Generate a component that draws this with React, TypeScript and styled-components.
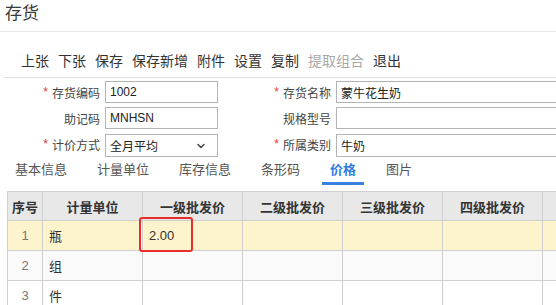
import React from 'react';
import styled, { createGlobalStyle } from 'styled-components';
import { ChevronDown } from 'lucide-react';

const GlobalStyle = createGlobalStyle`
html, body {
    margin: 0;
    padding: 0;
    background: #ffffff;
    overflow: hidden;
}
* { box-sizing: border-box; }
`;

const FONT = `"Liberation Sans", "Noto Sans CJK SC", sans-serif`;

const Page = styled.div`
width: 556px;
height: 305px;
overflow: hidden;
font-family: ${FONT};
color: #333;
`;

const Title = styled.div`
height: 32px;
line-height: 27px;
padding-left: 5px;
font-size: 17px;
color: #3a3a3a;
border-bottom: 1px solid #e6e6e6;
`;

const Toolbar = styled.div`
display: flex;
gap: 9px;
height: 46px;
padding: 20px 0 0 17px;
margin-left: 4px;
border-bottom: 1px solid #e3e3e3;
font-size: 14px;
line-height: 18px;
`;

const ToolButton = styled.span<{ disabled?: boolean }>`
color: ${props => props.disabled ? '#a8a8a8' : '#333'};
cursor: pointer;
white-space: nowrap;
`;

const Form = styled.div`
display: grid;
grid-template-columns: 105px 113px 118px 240px;
grid-auto-rows: 22px;
row-gap: 4px;
padding-top: 3px;
font-size: 12px;
`;

const Label = styled.div`
display: flex;
align-items: center;
justify-content: flex-end;
padding-right: 5px;
color: #444;
white-space: nowrap;
`;

const Star = styled.span`
color: #e5332e;
margin-right: 4px;
`;

const Input = styled.div`
height: 22px;
border: 1px solid #b4b4b4;
padding: 0 4px;
display: flex;
align-items: center;
font-size: 12px;
color: #222;
background: #fff;
`;

const Select = styled(Input)`
height: 23px;
margin-top: 1px;
justify-content: space-between;
padding-right: 10px;
`;

const Tabs = styled.div`
display: flex;
gap: 14px;
padding-left: 7px;
margin-top: 3px;
height: 28px;
`;

const Tab = styled.div<{ active?: boolean }>`
padding: 0 8px;
height: 27px;
line-height: 24px;
font-size: 13px;
color: ${props => props.active ? '#2f7ce0' : '#555'};
font-weight: ${props => props.active ? 'bold' : 'normal'};
border-bottom: 3px solid ${props => props.active ? '#3a80e0' : 'transparent'};
white-space: nowrap;
`;

const Grid = styled.table`
margin: 5px 0 0 7px;
border-collapse: collapse;
table-layout: fixed;
width: 630px;
font-size: 13px;
`;

const Th = styled.th`
height: 29px;
background: #e8e8e8;
border: 1px solid #cfcfcf;
font-weight: bold;
color: #333;
text-align: center;
padding: 0;
white-space: nowrap;
`;

const Tr = styled.tr<{ tone: 'selected' | 'alt' | 'plain' }>`
height: 30px;
background: ${props => props.tone === 'selected' ? '#fdf4cd' : props.tone === 'alt' ? '#fafafa' : '#ffffff'};
`;

const Td = styled.td<{ center?: boolean; muted?: boolean }>`
border: 1px solid #cfcfcf;
padding: 0 6px;
text-align: ${props => props.center ? 'center' : 'left'};
color: ${props => props.muted ? '#777' : '#333'};
position: relative;
`;

const Focus = styled.div`
position: absolute;
left: -4px;
top: -4px;
width: 54px;
height: 35px;
border: 2px solid #e8302b;
border-radius: 3px;
pointer-events: none;
`;

const tools = ['上张', '下张', '保存', '保存新增', '附件', '设置', '复制', '提取组合', '退出'];
const tabs = ['基本信息', '计量单位', '库存信息', '条形码', '价格', '图片'];
const columns: [string, number][] = [
    ['序号', 35], ['计量单位', 100], ['一级批发价', 100], ['二级批发价', 100],
    ['三级批发价', 100], ['四级批发价', 100], ['', 95],
];
const units = ['瓶', '组', '件'];

export default function App(): JSX.Element {
    return (
        <Page>
            <GlobalStyle />
            <Title>存货</Title>
            <Toolbar>
                {tools.map(t => <ToolButton key={t} disabled={t === '提取组合'}>{t}</ToolButton>)}
            </Toolbar>
            <Form>
                <Label><Star>*</Star>存货编码</Label>
                <Input>1002</Input>
                <Label><Star>*</Star>存货名称</Label>
                <Input>蒙牛花生奶</Input>

                <Label>助记码</Label>
                <Input>MNHSN</Input>
                <Label>规格型号</Label>
                <Input />

                <Label><Star>*</Star>计价方式</Label>
                <Select>全月平均<ChevronDown size={12} strokeWidth={3} color="#444" /></Select>
                <Label><Star>*</Star>所属类别</Label>
                <Select>牛奶</Select>
            </Form>
            <Tabs>
                {tabs.map(t => <Tab key={t} active={t === '价格'}>{t}</Tab>)}
            </Tabs>
            <Grid>
                <colgroup>
                    {columns.map(([, w], i) => <col key={i} style={{ width: w }} />)}
                </colgroup>
                <thead>
                    <tr>
                        {columns.map(([name], i) => <Th key={i}>{name}</Th>)}
                    </tr>
                </thead>
                <tbody>
                    {units.map((u, i) => (
                        <Tr key={u} tone={i === 0 ? 'selected' : i === 1 ? 'alt' : 'plain'}>
                            <Td center muted>{i + 1}</Td>
                            <Td>{u}</Td>
                            <Td>{i === 0 && <>2.00<Focus /></>}</Td>
                            <Td />
                            <Td />
                            <Td />
                            <Td />
                        </Tr>
                    ))}
                </tbody>
            </Grid>
        </Page>
    );
}
